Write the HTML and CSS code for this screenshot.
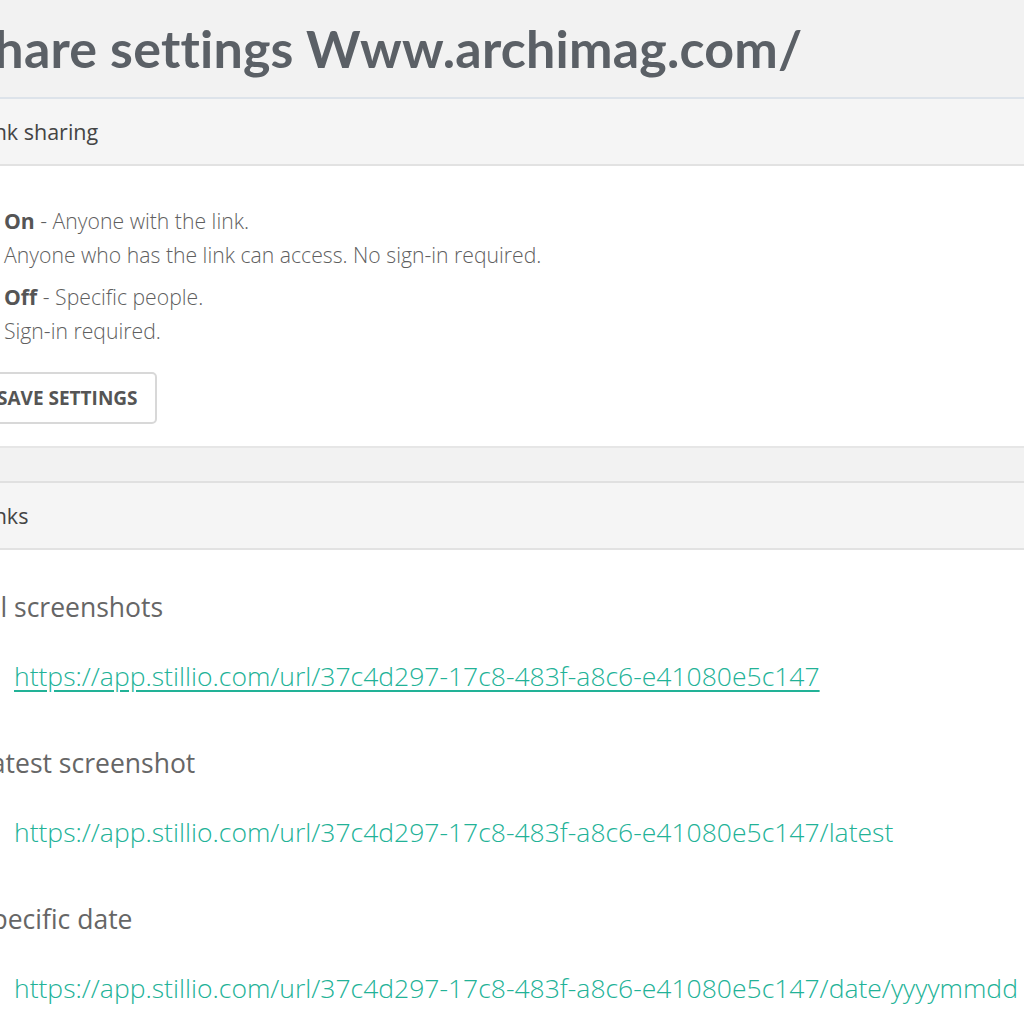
FILE: index.html
```html
<!DOCTYPE html>
<html>
<head>
<meta charset="utf-8">
<link rel="stylesheet" href="styles.css">
</head>
<body>
<div class="page">
  <header class="title-bar">
    <h1 class="title">Share settings Www.archimag.com/</h1>
  </header>

  <section class="panel">
    <div class="panel-heading">Link sharing</div>
    <div class="panel-body">
      <div class="option">
        <span class="radio checked"></span>
        <div class="option-text">
          <div class="option-title"><b>On</b> - Anyone with the link.</div>
          <div class="option-desc">Anyone who has the link can access. No sign-in required.</div>
        </div>
      </div>
      <div class="option">
        <span class="radio"></span>
        <div class="option-text">
          <div class="option-title"><b>Off</b> - Specific people.</div>
          <div class="option-desc">Sign-in required.</div>
        </div>
      </div>
      <button class="btn">Save settings</button>
    </div>
  </section>

  <section class="panel links-panel">
    <div class="panel-heading">Links</div>
    <div class="panel-body links-body">
      <h3 class="link-title">All screenshots</h3>
      <p class="link-row"><a class="link underlined" href="#">https://app.stillio.com/url/37c4d297-17c8-483f-a8c6-e41080e5c147</a></p>
      <h3 class="link-title">Latest screenshot</h3>
      <p class="link-row"><a class="link" href="#">https://app.stillio.com/url/37c4d297-17c8-483f-a8c6-e41080e5c147/latest</a></p>
      <h3 class="link-title">Specific date</h3>
      <p class="link-row"><a class="link" href="#">https://app.stillio.com/url/37c4d297-17c8-483f-a8c6-e41080e5c147/date/yyyymmdd</a></p>
    </div>
  </section>
</div>
</body>
</html>
```

FILE: styles.css
```css
html, body {
  margin: 0;
  padding: 0;
  background: #f2f2f2;
  overflow: hidden;
  height: 1024px;
}

body {
  font-family: "Open Sans", "Liberation Sans", sans-serif;
  color: #555;
}

.page {
  margin-left: -40px;
  width: 1100px;
}

.title-bar {
  height: 97px;
  border-bottom: 2px solid #dde3ea;
  display: flex;
  align-items: flex-end;
}

.title {
  margin: 0 0 23px 6px;
  font-family: "Lato", "Open Sans", sans-serif;
  font-weight: 700;
  font-size: 52px;
  line-height: 1;
  color: #5b6066;
  letter-spacing: 0.2px;
}

.panel {
  background: #fff;
  border-bottom: 2px solid #e6e6e6;
}

.panel-heading {
  background: #f5f5f5;
  height: 65px;
  border-bottom: 2px solid #e2e2e2;
  display: flex;
  align-items: center;
  padding-left: 17px;
  font-size: 21.5px;
  color: #444;
}

.panel-body {
  padding: 38px 0 22px 48px;
  height: 220px;
}

.option {
  display: flex;
  align-items: flex-start;
  gap: 8px;
  margin-bottom: 8px;
}

.radio {
  width: 16px;
  height: 16px;
  border: 2px solid #bbb;
  border-radius: 50%;
  margin-left: -32px;
  margin-top: 8px;
  flex: none;
}

.option-text {
  font-size: 21.2px;
  font-weight: 300;
  line-height: 34px;
  color: #5f5f5f;
}

.option-title b {
  color: #555;
  font-weight: 700;
}

.btn {
  margin-top: 16px;
  margin-left: -60px;
  height: 52px;
  padding: 0 17px 0 47px;
  background: #fff;
  border: 2px solid #d8d8d8;
  border-radius: 5px;
  font-family: "Open Sans", sans-serif;
  font-weight: 700;
  font-size: 19px;
  text-transform: uppercase;
  color: #555;
}

.links-panel {
  margin-top: 33px;
  border-top: 2px solid #e0e0e0;
}

.links-body {
  padding: 37px 0 0 17px;
  height: auto;
}

.link-title {
  margin: 0;
  font-weight: 400;
  font-size: 26.5px;
  line-height: 40px;
  color: #666;
}

.link-row {
  margin: 29px 0 47px 37px;
  font-size: 26.5px;
  line-height: 40px;
}

.link {
  color: #22b297;
  text-decoration: none;
  font-weight: 300;
}

.link.underlined {
  text-decoration: underline;
  text-underline-offset: 4px;
}
```
